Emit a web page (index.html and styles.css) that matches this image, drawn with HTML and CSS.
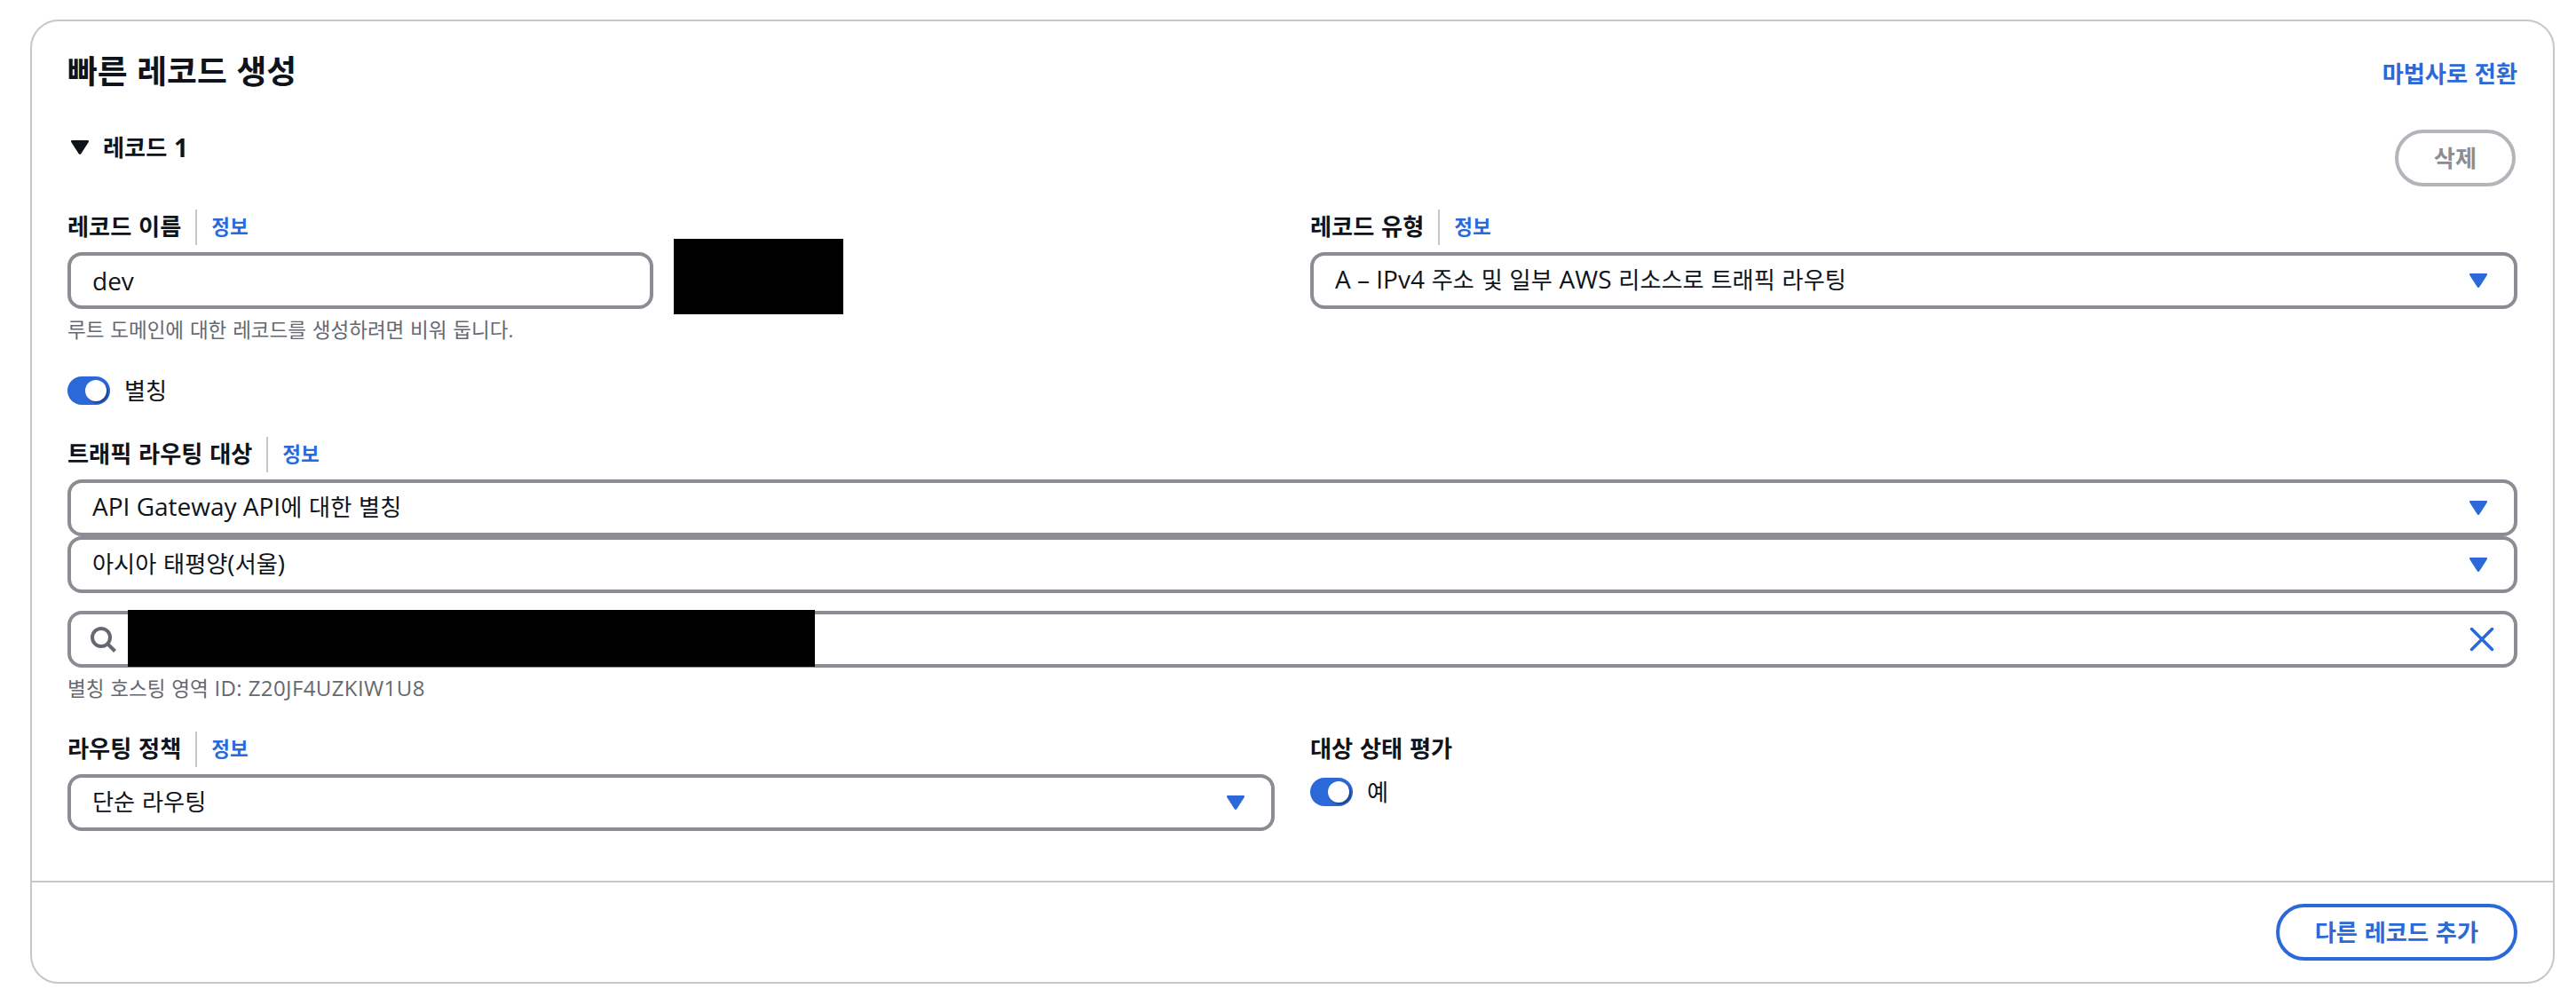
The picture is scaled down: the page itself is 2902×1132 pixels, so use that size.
FILE: index.html
```html
<!DOCTYPE html>
<html lang="ko">
	<head>
		<meta charset="UTF-8">
		<title>빠른 레코드 생성</title>
		<link rel="stylesheet" href="styles.css">
	</head>
	<body>
		<div class="card">
			<div class="content">
				<div class="header">
					<h2>빠른 레코드 생성</h2>
					<a class="switch">마법사로 전환</a>
				</div>

				<div class="record">
					<h3><svg class="arrow" viewBox="0 0 20 16"><path d="M1.200 0h17.600q1.800.2 1 1.900L11.400 15q-1.400 2-2.800 0L.2 1.900Q-.6.2 1.200 0z"/></svg>레코드 <span class="en">1</span></h3>
					<button class="btn disabled">삭제</button>
				</div>

				<div class="columns">
					<div>
						<div class="label"><b>레코드 이름</b><a>정보</a></div>
						<div class="name">
							<div class="field"><span class="en dev">dev</span></div>
							<div class="mask mask-domain"></div>
						</div>
						<p class="hint">루트 도메인에 대한 레코드를 생성하려면 비워 둡니다.</p>
					</div>
					<div>
						<div class="label"><b>레코드 유형</b><a>정보</a></div>
						<div class="field">
							<span class="value"><span class="en">A – IPv4</span> 주소 및 일부 <span class="en">AWS</span> 리소스로 트래픽 라우팅</span>
							<svg class="arrow" viewBox="0 0 20 16"><path d="M1.200 0h17.600q1.800.2 1 1.900L11.400 15q-1.400 2-2.800 0L.2 1.900Q-.6.2 1.200 0z"/></svg>
						</div>
					</div>
				</div>

				<div class="toggle alias"><i></i>별칭</div>

				<div class="label"><b>트래픽 라우팅 대상</b><a>정보</a></div>
				<div class="field">
					<span class="value"><span class="en">API Gateway API</span>에 대한 별칭</span>
					<svg class="arrow" viewBox="0 0 20 16"><path d="M1.200 0h17.600q1.800.2 1 1.900L11.400 15q-1.400 2-2.800 0L.2 1.900Q-.6.2 1.200 0z"/></svg>
				</div>
				<div class="field">
					<span class="value">아시아 태평양<span class="en">(</span>서울<span class="en">)</span></span>
					<svg class="arrow" viewBox="0 0 20 16"><path d="M1.200 0h17.600q1.800.2 1 1.900L11.400 15q-1.400 2-2.800 0L.2 1.900Q-.6.2 1.200 0z"/></svg>
				</div>
				<div class="field search">
					<svg class="magnifier" viewBox="0 0 32 32"><circle cx="14" cy="14" r="10"/><path d="M21 21l8.500 8.500"/></svg>
					<svg class="close" viewBox="0 0 32 32"><path d="M4.500 4.500l23 23M27.500 4.500l-23 23"/></svg>
					<div class="mask mask-target"></div>
				</div>
				<p class="hint">별칭 호스팅 영역 <span class="en">ID: Z20JF4UZKIW1U8</span></p>

				<div class="columns policy">
					<div>
						<div class="label"><b>라우팅 정책</b><a>정보</a></div>
						<div class="field">
							<span class="value">단순 라우팅</span>
							<svg class="arrow" viewBox="0 0 20 16"><path d="M1.200 0h17.600q1.800.2 1 1.900L11.400 15q-1.400 2-2.800 0L.2 1.900Q-.6.2 1.200 0z"/></svg>
						</div>
					</div>
					<div>
						<div class="label"><b>대상 상태 평가</b></div>
						<div class="toggle"><i></i>예</div>
					</div>
				</div>
			</div>

			<div class="footer">
				<button class="btn">다른 레코드 추가</button>
			</div>
		</div>
	</body>
</html>
```

FILE: styles.css
```css
*{margin: 0;padding: 0;box-sizing: border-box;}
body{
	padding: 22px 24px 24px 34px;
	background: #fff;
	color: #0f141a;
	font-family: "Open Sans","Noto Sans CJK KR",sans-serif;
	font-size: 26.200px;
	line-height: 40px;
	word-spacing: 1px;
}
.card{
	border: 2px solid #c6c6cd;
	border-radius: 32px;
}
.content{
	padding: 32px 40px 56px;
}
/* latin runs are a little larger than the hangul around them */
.en{
	font-size: 28px;
	line-height: 0;
	word-spacing: 0;
}
a{
	color: #2b69d9;
	font-weight: 700;
}
.header,.record{
	display: flex;
	justify-content: space-between;
	align-items: flex-start;
}
.header{
	height: 48px;
	margin-bottom: 42px;
}
h2{
	font-size: 36.800px;
	line-height: 48px;
}
.switch{
	padding-top: 7px;
}
.record{
	height: 64px;
	margin-bottom: 26px;
	padding-right: 2px;
}
h3{
	display: flex;
	align-items: center;
	font-size: 26.200px;
	white-space: pre;
}
.arrow{
	width: 20px;
	height: 16px;
	flex: none;
	fill: #2b69d9;
}
h3 .arrow{
	margin: 0 16px 0 4px;
	fill: #0f141a;
}
.btn{
	height: 64px;
	padding: 0 40px;
	border: 4px solid #2b69d9;
	border-radius: 32px;
	background: #fff;
	color: #2b69d9;
	font: inherit;
	font-weight: 700;
	word-spacing: 1px;
}
.disabled{
	border-color: #b4b4bb;
	color: #8c8c94;
}
.columns{
	display: grid;
	grid-template-columns: 1fr 1fr;
	gap: 40px;
}
.label{
	display: flex;
	height: 40px;
	margin-bottom: 8px;
}
.label b{
	line-height: 39px;
}
.label a{
	margin-left: 16px;
	padding-left: 16px;
	border-left: 2px solid #c6c6cd;
	font-size: 22.500px;
}
.field{
	display: flex;
	justify-content: space-between;
	align-items: center;
	height: 64px;
	padding: 0 30px 0 24px;
	border: 4px solid #8c8c94;
	border-radius: 16px;
}
.value{
	margin-top: -2px;
}
.name{
	position: relative;
}
.name .field{
	width: 660px;
}
.mask{
	position: absolute;
	background: #000;
}
.mask-domain{
	left: 683px;
	top: -15px;
	width: 191px;
	height: 85px;
}
.hint{
	margin-top: 8px;
	color: #656871;
	font-size: 22.500px;
	line-height: 32px;
}
.hint .en{
	font-size: 24px;
	line-height: 0;
	letter-spacing: 0.4px;
}
.toggle{
	display: flex;
	align-items: center;
	height: 32px;
}
.toggle i{
	width: 48px;
	height: 32px;
	margin-right: 16px;
	padding: 4px 4px 4px 20px;
	border-radius: 16px;
	background: #2b69d9;
}
.toggle i::after{
	content: "";
	display: block;
	width: 24px;
	height: 24px;
	border-radius: 50%;
	background: #fff;
	box-shadow: 2px 2px 2px rgba(0,7,22,0.4);
}
.policy .toggle{
	margin-top: 12px;
}
.alias{
	margin: 36px 0;
}
.search{
	position: relative;
	margin-top: 20px;
	padding: 0 20px;
}
.magnifier,.close{
	width: 32px;
	height: 32px;
	fill: none;
	stroke: #656871;
	stroke-width: 4;
}
.close{
	stroke: #2b69d9;
	stroke-linecap: round;
	stroke-width: 3.500;
}
.mask-target{
	left: 64px;
	top: -5px;
	width: 774px;
	height: 64px;
}
.policy{
	margin-top: 32px;
}
.footer{
	display: flex;
	justify-content: flex-end;
	padding: 24px 40px;
	border-top: 2px solid #c6c6cd;
}
```
